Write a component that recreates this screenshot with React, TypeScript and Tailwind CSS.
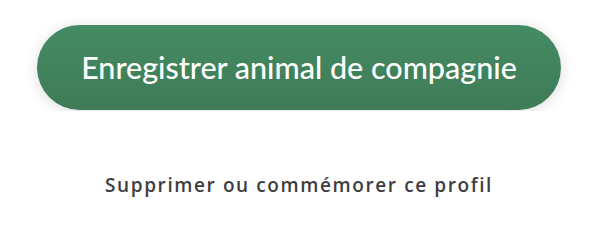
export default function App() {
  return (
    <div className="w-[610px] h-[240px] bg-white">
      <div className="overflow-hidden pt-[25px] pb-px pl-[37px] pr-[49px]">
        <button className="flex h-[85px] w-[524px] items-center justify-center rounded-full bg-gradient-to-b from-[#448b64] to-[#3e7b56] shadow-[0_2px_14px_rgba(0,0,0,0.14)] font-['Lato',sans-serif] text-[30.5px] font-medium text-white">
          Enregistrer animal de compagnie
        </button>
      </div>
      <div className="pt-[60px] pr-[12px] text-center">
        <a className="font-['Open_Sans',sans-serif] text-[19px] font-semibold tracking-[1.6px] text-[#3e3e41]">
          Supprimer ou commémorer ce profil
        </a>
      </div>
    </div>
  );
}
